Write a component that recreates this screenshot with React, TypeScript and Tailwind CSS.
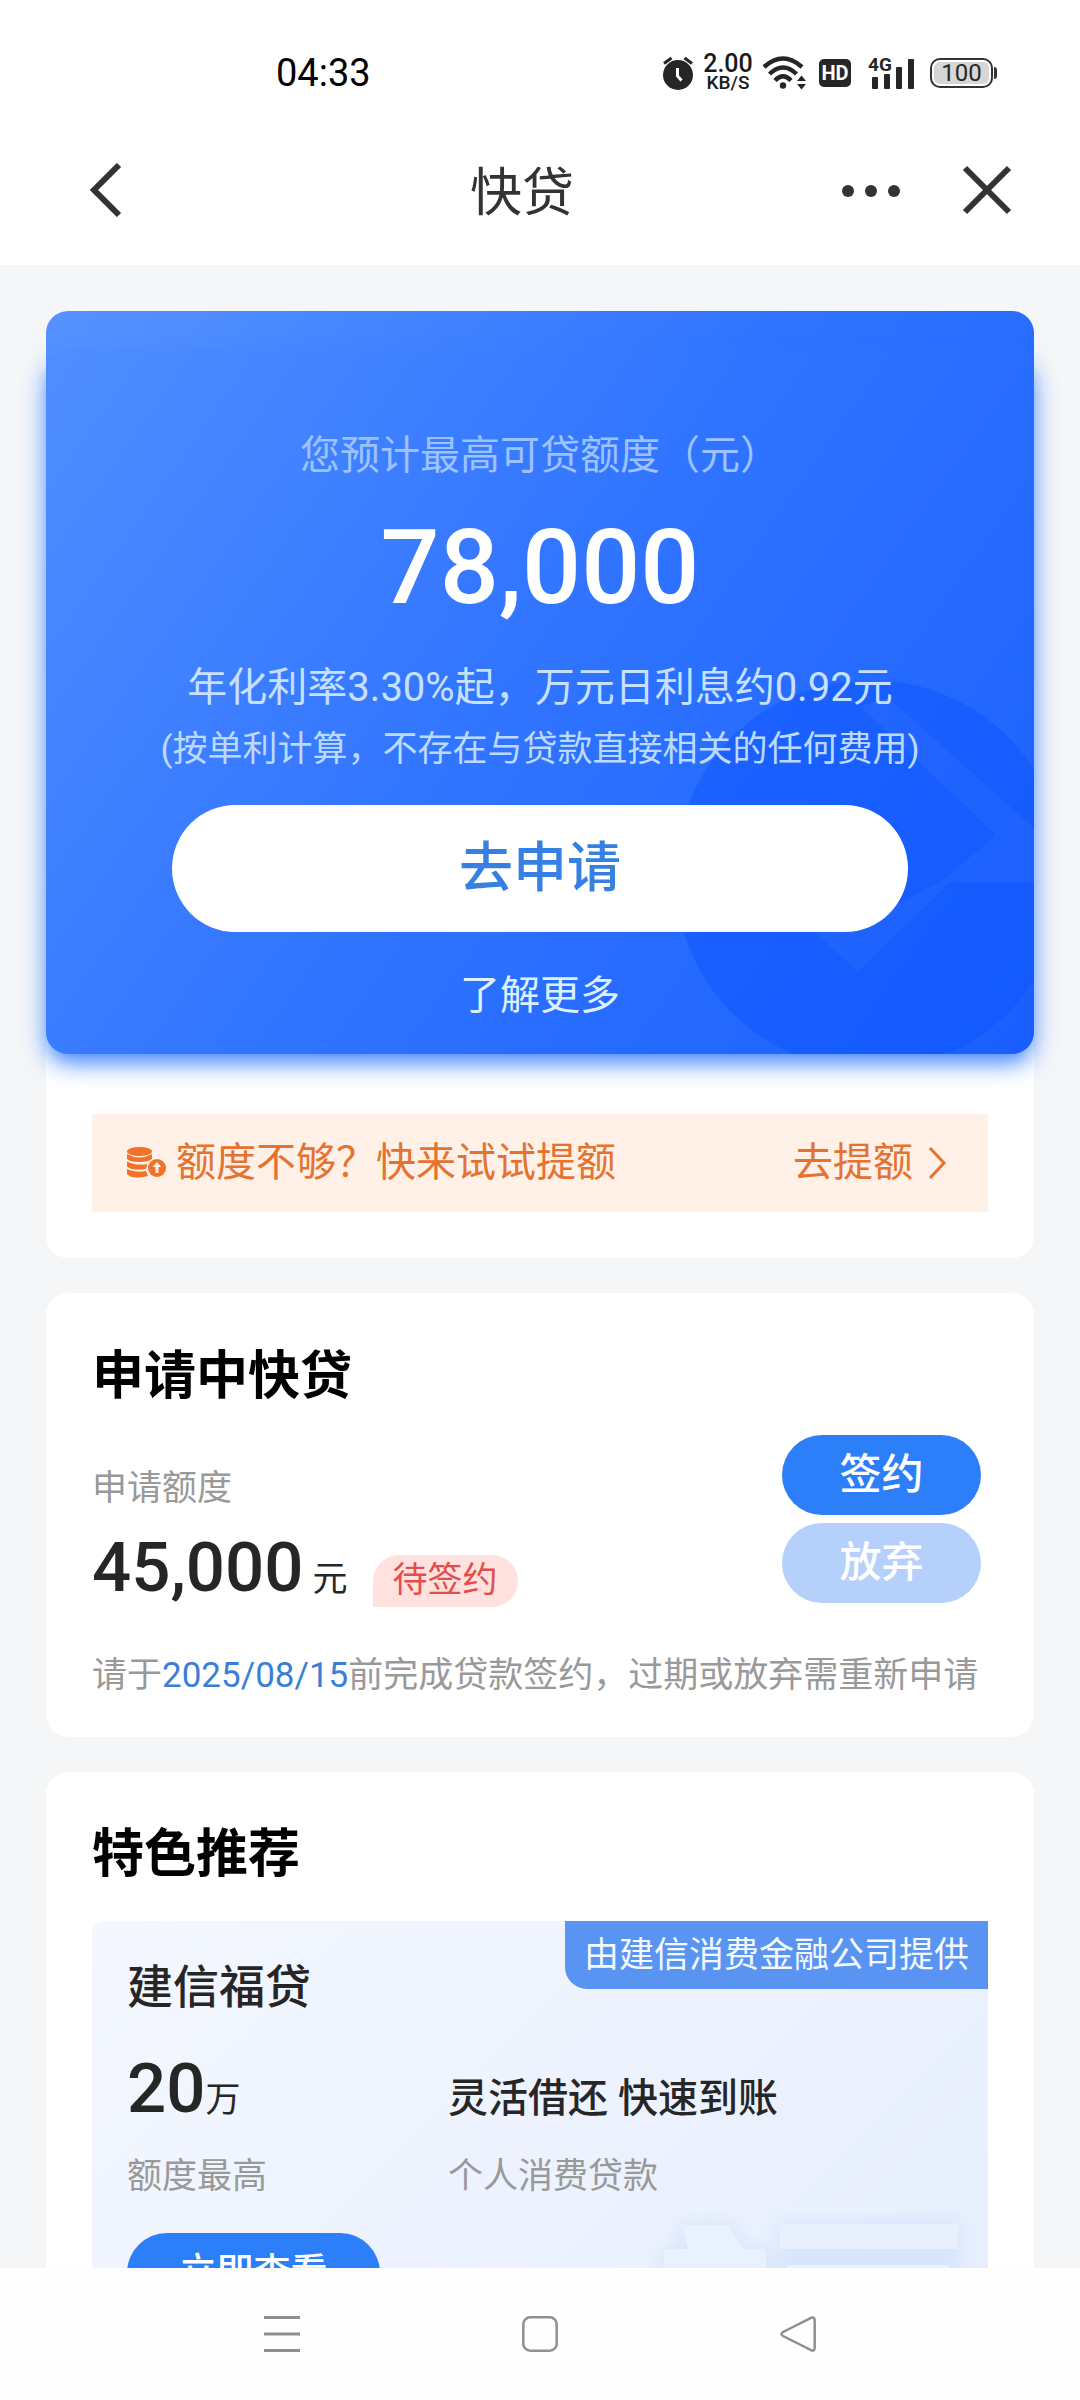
import React from 'react';

const StatusIcons: React.FC = () => (
  <div className="flex items-center">
    <svg className="w-[30px] h-[34px]" viewBox="0 0 30 34" fill="none" stroke="#262626" aria-label="闹钟">
      <circle cx="15" cy="19" r="15" fill="#262626" stroke="none" />
      <path d="M1 7.5 L8.5 2" strokeWidth="3" />
      <path d="M29 7.5 L21.500 2" strokeWidth="3" />
      <path d="M14.500 12 V20 L18.500 24.500" stroke="#fff" strokeWidth="3" />
    </svg>
    <div className="ml-[9px] w-[52px] text-center text-[#1a1a1a] font-medium">
      <div className="text-[25px] leading-[20px]">2.00</div>
      <div className="text-[19px] leading-[18px]">KB/S</div>
    </div>
    <svg className="ml-[8px] w-[46px] h-[34px]" viewBox="0 0 46 34" fill="none" stroke="#262626" aria-label="无线网络">
      <path d="M2 11 Q21 -6 40 11" strokeWidth="4.500" />
      <path d="M7.500 18 Q21 5 34.500 18" strokeWidth="4.500" />
      <path d="M13 24.500 Q21 16 29 24.500" strokeWidth="4.500" />
      <circle cx="21" cy="29.500" r="3.200" fill="#262626" stroke="none" />
      <path d="M35 25 L39.500 19.500 L44 25Z M35 28 L39.500 33.500 L44 28Z" fill="#262626" stroke="none" />
    </svg>
    <span className="ml-[11px] w-8 h-7 rounded-[5px] bg-[#262626] text-white text-[20px] leading-[28px] font-bold text-center">
      HD
    </span>
    <div className="relative ml-[17px] w-[47px] h-[34px]">
      <svg className="w-[47px] h-[34px]" viewBox="0 0 47 34" fill="#262626" aria-label="信号">
        <rect x="4" y="21" width="6" height="12" rx="1" />
        <rect x="16" y="18" width="6" height="15" rx="1" />
        <rect x="28" y="11" width="6" height="22" rx="1" />
        <rect x="40" y="3" width="6" height="30" rx="1" />
      </svg>
      <span className="absolute left-0 top-0 text-[19px] leading-[18px] font-bold text-[#262626]">4G</span>
    </div>
    <div className="ml-[15px] flex items-center">
      <div className="w-[63px] h-[30px] p-[2px] rounded-[10px] border-2 border-[#333]">
        <div className="h-full rounded-[6px] bg-[#d6d6d6] text-center text-[24px] leading-[23px] text-[#262626]">100</div>
      </div>
      <div className="ml-px w-[3px] h-3 rounded-r bg-[#333]" />
    </div>
  </div>
);

const Header: React.FC = () => (
  <header className="shrink-0 bg-white">
    <div className="flex h-[117px] items-center justify-between pt-7 pl-[276px] pr-[83px]">
      <span className="text-[38px] leading-[44px] text-black">04:33</span>
      <StatusIcons />
    </div>
    <div className="mb-[2px] grid h-[146px] grid-cols-3 items-center px-[68px]">
      <button type="button" aria-label="返回" className="justify-self-start ml-5">
        <svg className="w-9 h-[54px]" viewBox="0 0 36 54" fill="none" stroke="#333" strokeWidth="6">
          <path d="M31 2 L6 27 L31 52" />
        </svg>
      </button>
      <h1 className="-ml-9 pt-2 text-center text-[52px] leading-[60px] text-[#333]">快贷</h1>
      <div className="flex items-center justify-self-end gap-[60px]">
        <button type="button" aria-label="更多">
          <svg className="w-[62px] h-4" viewBox="0 0 62 16" fill="#333">
            <circle cx="8" cy="9" r="6" />
            <circle cx="31" cy="9" r="6" />
            <circle cx="54" cy="9" r="6" />
          </svg>
        </button>
        <button type="button" aria-label="关闭">
          <svg className="w-[50px] h-[50px]" viewBox="0 0 50 50" fill="none" stroke="#333" strokeWidth="6">
            <path d="M3 3 L47 47 M47 3 L3 47" />
          </svg>
        </button>
      </div>
    </div>
  </header>
);

const QuotaCard: React.FC = () => (
  <section className="rounded-[22px] bg-white pb-[46px]">
    <div className="rounded-[22px] bg-linear-125 from-[#5692ff] via-[#2f73ff] to-[#1a5fff] pt-[42px]">
      <div className="relative flex flex-col items-center rounded-[22px] bg-linear-125 from-[#4f8dff] via-[#2f73ff] to-[#1a5fff] pt-[75px] pb-[30px] shadow-[0_10px_24px_-2px_#2f7bff]">
        <svg className="absolute right-0 bottom-0 w-[360px] h-[372px] rounded-br-[22px]" viewBox="0 0 360 372" aria-hidden="true">
          <circle cx="196" cy="193" r="195" fill="#0850ff" opacity="0.4" />
          <path
            d="M186 24 L214 16 L360 146 L360 200 L276 200 L184 290 L130 240 L190 240 L269 198 L322 153 Z"
            fill="#5a90ff"
            opacity="0.14"
          />
        </svg>
        <p className="relative text-[40px] leading-[56px] text-[#9cc2ff]">您预计最高可贷额度（元）</p>
        <p className="relative mt-7 text-[104px] leading-[112px] font-medium text-white">78,000</p>
        <p className="relative mt-9 text-[40px] leading-[56px] text-[#c6e0ff]">年化利率3.30%起，万元日利息约0.92元</p>
        <p className="relative mt-[10px] text-[35px] leading-[48px] text-[#bcdaff]">
          (按单利计算，不存在与贷款直接相关的任何费用)
        </p>
        <button
          type="button"
          className="relative mt-[31px] h-[127px] w-[74.4%] rounded-full bg-white text-[54px] leading-[60px] font-medium text-[#3580e0]"
        >
          去申请
        </button>
        <a href="#more" className="relative mt-9 text-[40px] leading-[56px] text-[#def0ff]">
          了解更多
        </a>
      </div>
    </div>
    <a
      href="#raise"
      className="mx-[46px] mt-[60px] flex h-[98px] items-center bg-[#fff0e8] pl-[35px] pr-[41px] text-[40px] leading-[56px] text-[#e5722f]"
    >
      <svg className="w-10 h-8" viewBox="0 0 40 32" fill="#f37128" aria-hidden="true">
        <ellipse cx="12.500" cy="4.500" rx="12.500" ry="4.500" />
        <path d="M0 7 Q12 14 25 7 V12 Q22 15 12 15 Q3 15 0 12Z" />
        <path d="M0 14.500 Q8 19 21 17 L19 22 Q4 24 0 19.500Z" />
        <path d="M0 22 Q8 26 19 24 L21 29 Q5 33 0 27Z" />
        <circle cx="30" cy="21" r="10.500" fill="#fff0e8" />
        <circle cx="30" cy="21" r="9" />
        <path d="M30 15 L34.500 20 H31.500 V26 H28.500 V20 H25.500Z" fill="#fff0e8" />
      </svg>
      <span className="ml-[9px] flex-1">额度不够？快来试试提额</span>
      <span>去提额</span>
      <svg className="ml-[14px] w-5 h-8" viewBox="0 0 20 32" fill="none" stroke="#e5722f" strokeWidth="3" aria-hidden="true">
        <path d="M3 1 L17 16 L3 31" />
      </svg>
    </a>
  </section>
);

const PendingCard: React.FC = () => (
  <section className="rounded-[22px] bg-white px-[46px] pt-[54px] pb-[37px]">
    <h2 className="text-[52px] leading-[60px] font-bold text-black">申请中快贷</h2>
    <div className="mt-7 flex justify-between">
      <div className="pt-[30px]">
        <p className="text-[35px] leading-[48px] text-[#999]">申请额度</p>
        <div className="mt-4 flex items-end text-[#262626]">
          <strong className="text-[69px] leading-[78px] font-medium">45,000</strong>
          <span className="ml-[9px] text-[35px] leading-[54px]">元</span>
          <span className="ml-[25px] rounded-full rounded-bl-none bg-[#ffe1dd] px-5 text-[35px] leading-[52px] text-[#e34d4d]">
            待签约
          </span>
        </div>
      </div>
      <div className="mr-[7px] flex w-[199px] flex-col gap-2 text-[42px] leading-[56px] font-medium text-white">
        <button type="button" className="h-20 rounded-full bg-[#2d7ff9]">签约</button>
        <button type="button" className="h-20 rounded-full bg-[#b4d0fb]">放弃</button>
      </div>
    </div>
    <p className="mt-[45px] text-[35px] leading-[48px] text-[#999]">
      请于<time className="text-[#3a7fd5]">2025/08/15</time>前完成贷款签约，过期或放弃需重新申请
    </p>
  </section>
);

const RecommendCard: React.FC = () => (
  <section className="rounded-[22px] bg-white px-[46px] pt-[53px] pb-[46px]">
    <h2 className="text-[52px] leading-[60px] font-bold text-black">特色推荐</h2>
    <div className="relative mt-9 rounded-tl-[12px] bg-linear-135 from-[#f4f7ff] to-[#e6eefd] px-[35px] pt-[36px] pb-10">
      <svg className="absolute right-0 top-[290px] w-[340px] h-[120px]" viewBox="0 0 340 120" aria-hidden="true">
        <defs>
          <filter id="soft" x="-20%" y="-20%" width="140%" height="140%">
            <feGaussianBlur stdDeviation="9" />
          </filter>
        </defs>
        <path d="M30 12 H84 L96 36 H124 V120 H12 V36 H34Z M130 10 H312 V120 H130Z" fill="#cfe0fa" opacity="0.65" filter="url(#soft)" />
        <path d="M34 14 H80 L95 38 H118 V120 H16 V38 H40Z" fill="#e8f2ff" />
        <path d="M132 13 H310 V38 H132Z" fill="#e8f0fe" />
        <path d="M139 54 H301 V120 H139Z" fill="#e8f2ff" />
      </svg>
      <span className="absolute right-0 top-0 rounded-bl-[22px] bg-[#5a94f2] px-[19px] pt-[2px] text-[35px] leading-[66px] text-[#f2faff]">
        由建信消费金融公司提供
      </span>
      <h3 className="text-[46px] leading-[60px] font-medium text-[#262626]">建信福贷</h3>
      <div className="relative mt-8 grid grid-cols-[321px_1fr] items-baseline text-[#262626]">
        <p className="text-[35px] leading-[80px]">
          <strong className="text-[69px] font-medium">20</strong>万
        </p>
        <p className="text-[40px] leading-[56px] font-medium">灵活借还 快速到账</p>
      </div>
      <div className="relative mt-3 grid grid-cols-[321px_1fr] text-[35px] leading-[48px] text-[#999]">
        <p>额度最高</p>
        <p>个人消费贷款</p>
      </div>
      <button type="button" className="mt-8 h-20 w-[253px] rounded-full bg-[#2d7ff9] text-[37px] leading-[56px] font-medium text-white">
        立即查看
      </button>
    </div>
  </section>
);

const SystemNav: React.FC = () => (
  <nav className="grid h-[132px] shrink-0 grid-cols-3 items-center justify-items-center bg-[#fefefe] px-[153px]">
    <button type="button" aria-label="任务">
      <svg className="w-9 h-9" viewBox="0 0 36 36" stroke="#8f8f8f" strokeWidth="3">
        <path d="M0 1.500 H36 M0 18 H36 M0 34.500 H36" />
      </svg>
    </button>
    <button type="button" aria-label="主页">
      <svg className="w-9 h-9" viewBox="0 0 36 36" fill="none" stroke="#8f8f8f" strokeWidth="2.500">
        <rect x="1.300" y="1.300" width="33.400" height="33.400" rx="7" />
      </svg>
    </button>
    <button type="button" aria-label="后退">
      <svg className="w-9 h-9" viewBox="0 0 36 36" fill="none" stroke="#8f8f8f" strokeWidth="2.500">
        <path d="M31 1.800 Q34.700 0.500 34.700 4.500 V31.500 Q34.700 35.500 31 34.200 L3 20 Q0 18 3 16Z" />
      </svg>
    </button>
  </nav>
);

export default function App() {
  return (
    <div lang="zh-CN" className="flex h-screen flex-col bg-[#f4f6f8] font-[Roboto,'Noto_Sans_CJK_SC',sans-serif]">
      <Header />
      <main className="flex min-h-0 flex-1 flex-col gap-[35px] overflow-hidden px-[46px] pt-[46px] *:shrink-0">
        <QuotaCard />
        <PendingCard />
        <RecommendCard />
      </main>
      <SystemNav />
    </div>
  );
}
